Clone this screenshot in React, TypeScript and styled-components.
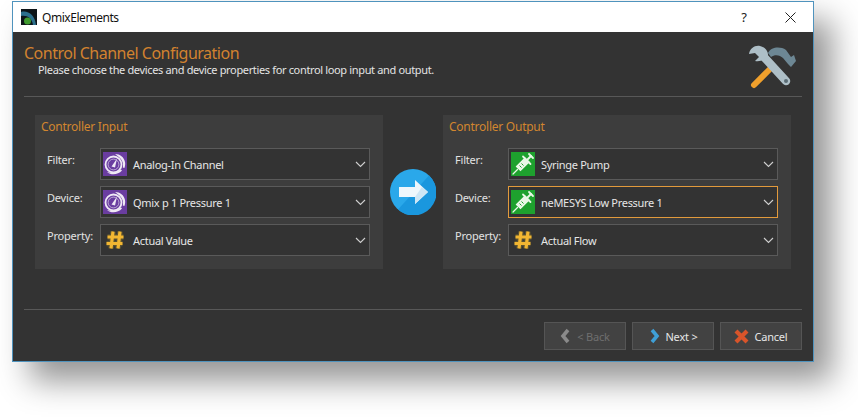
import React from "react";
import styled, { createGlobalStyle } from "styled-components";

const Global = createGlobalStyle`
  html, body { margin: 0; padding: 0; background: #fff; overflow: hidden; }
  body { width: 858px; height: 417px; font-family: "Noto Sans", "Liberation Sans", sans-serif; }
`;

const Page = styled.div`
  padding: 1px 0 0 12px;
`;

const Window = styled.div`
  width: 802px;
  height: 361px;
  box-sizing: border-box;
  border: 1px solid #4f93bd;
  background: #333333;
  box-shadow: 18px 19px 30px rgba(0, 0, 0, 0.42);
  display: flex;
  flex-direction: column;
`;

const TitleBar = styled.div`
  height: 30px;
  background: #fff;
  display: flex;
  align-items: center;
  padding-left: 8px;
  flex: none;
`;

const AppName = styled.div`
  font-size: 12px;
  color: #111;
  margin-left: 5px;
  flex: 1;
  letter-spacing: -0.45px;
`;

const TitleButton = styled.div`
  width: 46px;
  height: 30px;
  display: flex;
  align-items: center;
  justify-content: center;
  font-size: 13px;
  color: #222;
`;

const Body = styled.div`
  flex: 1;
  display: flex;
  flex-direction: column;
  padding: 0 11px 10px 11px;
  min-height: 0;
`;

const Header = styled.div`
  height: 64px;
  border-bottom: 1px solid #585858;
  display: flex;
  justify-content: space-between;
  flex: none;
`;

const HeaderText = styled.div`
  padding-top: 11px;
`;

const Heading = styled.div`
  font-size: 16px;
  line-height: 20px;
  color: #d2822f;
  letter-spacing: -0.5px;
`;

const SubHeading = styled.div`
  font-size: 11px;
  line-height: 13px;
  margin-left: 14px;
  color: #e4e4e4;
  letter-spacing: -0.35px;
`;

const ToolsBox = styled.div`
  padding: 13px 5px 0 0;
`;

const Columns = styled.div`
  display: flex;
  padding: 18px 10px 0 11px;
  flex: none;
`;

const Panel = styled.div`
  width: 348px;
  height: 154px;
  background: #3d3d3d;
  box-sizing: border-box;
  padding: 5px 13px 0 6px;
  flex: none;
`;

const PanelTitle = styled.div`
  font-size: 12px;
  line-height: 14px;
  color: #d2862f;
  margin-bottom: 14px;
  letter-spacing: -0.25px;
`;

const Rows = styled.div`
  display: flex;
  flex-direction: column;
  gap: 6px;
`;

const Row = styled.div`
  display: flex;
  height: 32px;
`;

const RowLabel = styled.div`
  width: 59px;
  font-size: 11px;
  line-height: 24px;
  color: #e2e2e2;
  padding-left: 6px;
  box-sizing: border-box;
  letter-spacing: -0.2px;
`;

const Combo = styled.div<{ $focus?: boolean }>`
  flex: 1;
  border: 1px solid ${(p) => (p.$focus ? "#e29a3c" : "#5a5a5a")};
  background: #333333;
  display: flex;
  align-items: center;
  padding: 0 3px 0 2px;
  box-sizing: border-box;
`;

const IconSlot = styled.div`
  width: 24px;
  height: 24px;
  flex: none;
  display: flex;
`;

const ComboText = styled.div`
  flex: 1;
  margin-left: 6px;
  font-size: 11px;
  color: #e6e6e6;
  letter-spacing: -0.3px;
`;

const Middle = styled.div`
  width: 60px;
  height: 154px;
  flex: none;
  display: flex;
  align-items: center;
  justify-content: center;
`;

const Footer = styled.div`
  margin-top: auto;
  border-top: 1px solid #585858;
  padding-top: 12px;
  margin-bottom: 1px;
  display: flex;
  justify-content: flex-end;
  gap: 6px;
`;

const Button = styled.div<{ $disabled?: boolean }>`
  width: 82px;
  height: 28px;
  box-sizing: border-box;
  border: 1px solid #555;
  background: #424242;
  display: flex;
  align-items: center;
  justify-content: center;
  gap: 5px;
  font-size: 11px;
  letter-spacing: -0.2px;
  color: ${(p) => (p.$disabled ? "#6f6f6f" : "#e6e6e6")};
`;

const LogoIcon = () => (
  <svg width="16" height="16" viewBox="0 0 16 16">
    <rect width="16" height="16" fill="#0d1418" />
    <path d="M0 3C7 1 14 6 15 16h-3C11 9 6 6 0 7z" fill="#2c6f8c" />
    <circle cx="6.5" cy="12" r="3.5" fill="#3f9a2e" />
  </svg>
);

const Gauge = () => (
  <svg width="24" height="24" viewBox="0 0 24 24">
    <rect width="24" height="24" fill="#6a3da0" />
    <path d="M12 2c5 0 9 3 10 8 .4 2 .2 4-.6 6l-1.6-.6c.8-4-.6-8-4-10.500z" fill="#efe9f5" />
    <circle cx="10.500" cy="12.500" r="8" fill="none" stroke="#efe9f5" strokeWidth="1.800" />
    <circle cx="10.500" cy="12.500" r="5.400" fill="none" stroke="#efe9f5" strokeWidth=".6" />
    <path d="M8.500 14.500L14 6.500l-2 9z" fill="#efe9f5" />
    <path d="M4 20c4 3.500 11 3 15-1.500l-1-1c-3 3-9 4-14 2.500z" fill="#efe9f5" />
  </svg>
);

const Syringe = () => (
  <svg width="24" height="24" viewBox="0 0 24 24">
    <rect width="24" height="24" fill="#1ea12e" />
    <g stroke="#e9f7e6" fill="none" strokeLinecap="round">
      <path d="M2 22l4.500-4.500" strokeWidth="1.200" />
      <path d="M5.500 14.500l4 4L18 10l-4-4z" fill="#e9f7e6" strokeWidth="1.200" />
      <path d="M12 4.500l7.500 7.500" strokeWidth="1.800" />
      <path d="M16.500 7.500l3.500-3.500" strokeWidth="2" />
      <path d="M18 2l4 4" strokeWidth="1.800" />
    </g>
    <path d="M8.500 13.500l2 2M10.500 11.500l2 2" stroke="#1ea12e" strokeWidth="1" />
  </svg>
);

const hashPath = "M10 3.500L8 20.500M17 3.500L15 20.500M4.500 9h16M3.500 15.500h16";

const Hash = () => (
  <svg width="24" height="24" viewBox="0 0 24 24">
    <path d={hashPath} stroke="#5b5230" strokeWidth="5.500" fill="none" />
    <path d={hashPath} stroke="#f2b632" strokeWidth="3.200" fill="none" />
  </svg>
);

const Chevron = () => (
  <svg width="11" height="7" viewBox="0 0 11 7" style={{ flex: "none" }}>
    <path d="M1 1l4.500 4.500L10 1" stroke="#d0d0d0" strokeWidth="1.100" fill="none" />
  </svg>
);

const BigArrow = () => (
  <svg width="46" height="46" viewBox="0 0 46 46">
    <circle cx="23" cy="23" r="23" fill="#2aa8ea" />
    <path d="M39 6.500A23 23 0 0 1 8 40.500z" fill="#1a97de" />
    <path d="M9 18h16V11l13 12-13 12v-7H9z" fill="#eef7fc" />
    <path d="M25 28v7l13-12-6-5z" fill="#cde6f5" />
  </svg>
);

const Tools = () => (
  <svg width="50" height="46" viewBox="0 0 50 46">
    <path d="M7 40L22 25" stroke="#f0a02c" strokeWidth="6" strokeLinecap="round" />
    <path
      d="M21 8C24 2 33 1 39 5l5 7 3-2 2 6-5 6-3-3-5-6c-3-3-8-4-12-1z"
      fill="#6d8794"
    />
    <path d="M17 12L39 36" stroke="#aebfc7" strokeWidth="8.500" strokeLinecap="round" />
    <path
      d="M13 1C8 0 3 3 2 9l6-1 4 4-4 4c5 1 11-1 13-6 0-4-3-8-8-9z"
      fill="#aebfc7"
    />
    <circle cx="39" cy="36" r="2" fill="#5b6d75" />
  </svg>
);

const BackIcon = () => (
  <svg width="12" height="16" viewBox="0 0 12 16">
    <path d="M8 2L3 8l5 6" stroke="#8a8a8a" strokeWidth="3.600" fill="none" />
  </svg>
);

const NextIcon = () => (
  <svg width="12" height="16" viewBox="0 0 12 16">
    <path d="M4 2l5 6-5 6" stroke="#3f9fd6" strokeWidth="3.600" fill="none" />
  </svg>
);

const CancelIcon = () => (
  <svg width="15" height="15" viewBox="0 0 15 15">
    <path d="M2 2l11 11M13 2L2 13" stroke="#d8542a" strokeWidth="4.200" />
  </svg>
);

type RowData = { label: string; icon: React.ReactNode; text: string; focus?: boolean };

const input: RowData[] = [
  { label: "Filter:", icon: <Gauge />, text: "Analog-In Channel" },
  { label: "Device:", icon: <Gauge />, text: "Qmix p 1 Pressure 1" },
  { label: "Property:", icon: <Hash />, text: "Actual Value" },
];
const output: RowData[] = [
  { label: "Filter:", icon: <Syringe />, text: "Syringe Pump" },
  { label: "Device:", icon: <Syringe />, text: "neMESYS Low Pressure 1", focus: true },
  { label: "Property:", icon: <Hash />, text: "Actual Flow" },
];

const ControllerPanel = ({ title, rows }: { title: string; rows: RowData[] }) => (
  <Panel>
    <PanelTitle>{title}</PanelTitle>
    <Rows>
      {rows.map((r) => (
        <Row key={r.label}>
          <RowLabel>{r.label}</RowLabel>
          <Combo $focus={r.focus}>
            <IconSlot>{r.icon}</IconSlot>
            <ComboText>{r.text}</ComboText>
            <Chevron />
          </Combo>
        </Row>
      ))}
    </Rows>
  </Panel>
);

export default function App() {
  return (
    <Page>
      <Global />
      <Window>
        <TitleBar>
          <LogoIcon />
          <AppName>QmixElements</AppName>
          <TitleButton>?</TitleButton>
          <TitleButton>
            <svg width="11" height="11" viewBox="0 0 11 11">
              <path d="M.5.5l10 10M10.500.5l-10 10" stroke="#222" strokeWidth="1" />
            </svg>
          </TitleButton>
        </TitleBar>
        <Body>
          <Header>
            <HeaderText>
              <Heading>Control Channel Configuration</Heading>
              <SubHeading>Please choose the devices and device properties for control loop input and output.</SubHeading>
            </HeaderText>
            <ToolsBox>
              <Tools />
            </ToolsBox>
          </Header>
          <Columns>
            <ControllerPanel title="Controller Input" rows={input} />
            <Middle>
              <BigArrow />
            </Middle>
            <ControllerPanel title="Controller Output" rows={output} />
          </Columns>
          <Footer>
            <Button $disabled>
              <BackIcon />
              &lt; Back
            </Button>
            <Button>
              <NextIcon />
              Next &gt;
            </Button>
            <Button>
              <CancelIcon />
              Cancel
            </Button>
          </Footer>
        </Body>
      </Window>
    </Page>
  );
}
